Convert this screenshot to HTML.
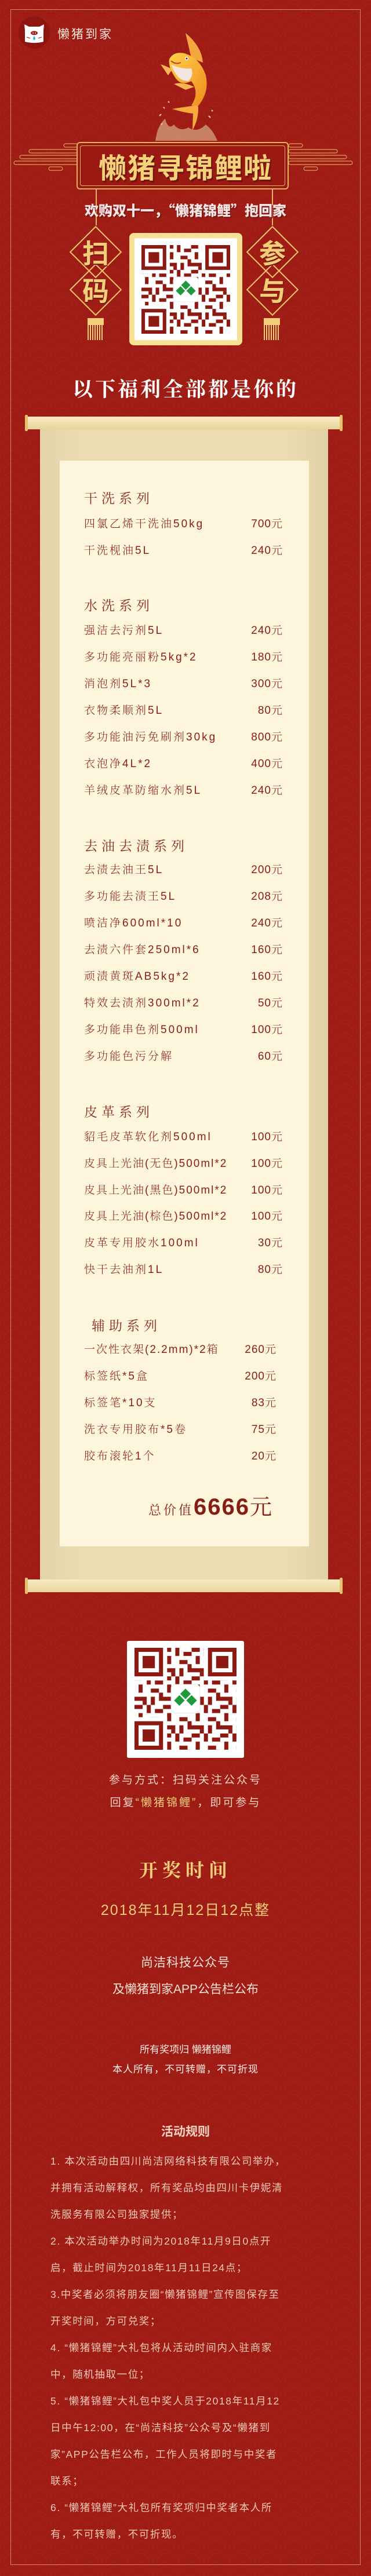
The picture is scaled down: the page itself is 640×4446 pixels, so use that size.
<!DOCTYPE html>
<html><head><meta charset="utf-8">
<style>
*{margin:0;padding:0;box-sizing:border-box}
body{width:640px;height:4446px;position:relative;overflow:hidden;
background-color:#9f1c15;
background-image:radial-gradient(circle at 50% 100%, transparent 14px, rgba(255,255,255,0.035) 15px, transparent 16px, transparent 20px, rgba(255,255,255,0.035) 21px, transparent 22px);
background-size:44px 22px;
font-family:"Liberation Sans","Noto Sans CJK SC",sans-serif}
.a{position:absolute}
.frame{left:18px;top:16px;width:604px;height:4411px;border:1.5px solid #d98c55}
.ser{font-family:"Liberation Serif","Noto Serif CJK SC",serif}
.row{position:absolute;left:145px;width:343px;height:26px;line-height:26px;font-size:19px;color:#8a1c14;letter-spacing:3px;font-family:"Liberation Sans","Noto Serif CJK SC",serif;white-space:nowrap;font-weight:300}
.row span{position:absolute;right:0;top:0;letter-spacing:1px}
.row.n{width:332px}
.sec{position:absolute;left:145px;font-size:23px;color:#8a2a20;letter-spacing:7px;height:30px;line-height:30px;font-family:"Noto Serif CJK SC",serif}
.c{left:0;width:640px;text-align:center;white-space:nowrap}
.gold{color:#f1cf79}
.dia{width:64px;height:64px;border:2px solid #f0c66a;transform:rotate(45deg)}
.dch{width:90px;text-align:center;font-size:46px;font-weight:bold;color:#f1cf79;line-height:50px;font-family:"Noto Sans CJK SC",sans-serif;text-shadow:1px 2px 0 #7a1410}
.rule{left:87px;width:480px;font-size:17.5px;color:#f3c9b8;letter-spacing:1.6px;white-space:nowrap;height:26px;line-height:26px}
</style></head><body>
<div class="a frame"></div>

<div class="a" style="left:32px;top:28px;width:54px;height:56px;border-radius:50%;background:#8f1510"></div>
<svg class="a" style="left:38px;top:38px" width="42" height="38" viewBox="0 0 42 38">
<path d="M4 4 L12 8 L30 8 L38 4 L37 14 L37 34 Q21 38 5 34 L5 14 Z" fill="#fff"/>
<ellipse cx="21" cy="19" rx="6" ry="3.5" fill="#9f1c15"/>
<circle cx="19" cy="19" r="1" fill="#fff"/><circle cx="23" cy="19" r="1" fill="#fff"/>
<path d="M21 24 Q17 30 21 31 Q25 30 21 24Z" fill="#2bb6e0"/>
<path d="M8 26 L14 28 M34 26 L28 28" stroke="#9f1c15" stroke-width="1"/>
</svg>
<div class="a" style="left:99px;top:43px;font-size:21px;color:#f6e6da;letter-spacing:3px;font-family:'Noto Sans CJK SC',sans-serif">懒猪到家</div>

<svg class="a" style="left:250px;top:40px" width="160" height="210" viewBox="250 40 160 210">
<defs><linearGradient id="fg" x1="0" y1="0" x2="1" y2="1"><stop offset="0" stop-color="#ffd24a"/><stop offset="1" stop-color="#f08a1c"/></linearGradient></defs>
<path d="M268 243 Q272 215 285 205 Q290 225 300 215 Q310 228 325 220 Q340 230 355 215 Q368 225 375 243 Z" fill="#e8d4a8" opacity="0.55"/>
<path d="M275 200 l3 -3 M282 185 l2 2 M360 200 l3 3 M365 190 l2 2 M278 215 l2 -2 M290 175 l2 2" stroke="#e8d4a8" stroke-width="2"/>
<path d="M320 57 Q348 80 350 108 L330 100 Z" fill="#f5a640"/>
<path d="M292 102 Q300 88 318 92 Q345 100 355 130 Q362 160 340 185 L330 182 Q345 160 330 140 Q310 150 300 130 Q290 115 292 102Z" fill="url(#fg)"/>
<path d="M296 112 Q305 140 325 140 Q335 130 330 118 Q315 120 296 112Z" fill="#f4e7e0"/>
<path d="M295 105 Q303 112 312 108" stroke="#c33" stroke-width="2" fill="none"/>
<circle cx="322" cy="101" r="3" fill="#fff"/><circle cx="322" cy="101" r="1.5" fill="#333"/>
<path d="M277 111 Q290 115 297 120 L290 130 Z" fill="#f7b655"/>
<path d="M300 145 Q315 140 335 150 L320 155 Z" fill="#f7b655"/>
<path d="M338 182 Q315 185 297 188 Q320 195 333 196 L332 225 Q343 205 342 184 Z" fill="#f6a93c"/>
</svg>

<svg class="a" style="left:22px;top:244px" width="112" height="52" viewBox="0 0 112 52">
<g fill="none" stroke="#d9a35a" stroke-width="1.2">
<rect x="88" y="4" width="24" height="6" rx="3"/><rect x="28" y="14" width="84" height="6" rx="3"/>
<rect x="12" y="24" width="100" height="6" rx="3"/><rect x="2" y="34" width="110" height="6" rx="3"/>
<rect x="62" y="44" width="24" height="6" rx="3"/></g></svg>
<svg class="a" style="left:498px;top:244px" width="112" height="52" viewBox="0 0 112 52">
<g fill="none" stroke="#d9a35a" stroke-width="1.2">
<rect x="0" y="4" width="24" height="6" rx="3"/><rect x="0" y="14" width="84" height="6" rx="3"/>
<rect x="0" y="24" width="100" height="6" rx="3"/><rect x="0" y="34" width="110" height="6" rx="3"/>
<rect x="26" y="44" width="24" height="6" rx="3"/></g></svg>

<div class="a" style="left:132px;top:245px;width:366px;height:82px;border:2px solid #eab55c;border-radius:6px;background:#9a1912"></div>
<div class="a" style="left:138px;top:251px;width:354px;height:70px;border:1.2px solid #eab55c;border-radius:4px"></div>
<div class="a c" style="top:258px;font-size:48px;font-weight:bold;line-height:56px;color:#f3d27a;letter-spacing:2px;text-shadow:2px 3px 0 #6e120e;font-family:'Noto Sans CJK SC',sans-serif">懒猪寻锦鲤啦</div>

<div class="a" style="left:165px;top:327px;width:2px;height:62px;background:#eab55c"></div>
<div class="a" style="left:469px;top:327px;width:2px;height:62px;background:#eab55c"></div>

<div class="a c" style="top:345px;font-size:24px;font-weight:900;line-height:34px;color:#f5e4e4;text-shadow:2px 2px 0 #7a1410;font-family:'Noto Sans CJK SC',sans-serif">欢购双十一，“懒猪锦鲤”抱回家</div>

<div class="a dia" style="left:133px;top:403px"></div>
<div class="a dia" style="left:133px;top:468px"></div>
<div class="a dia" style="left:438px;top:403px"></div>
<div class="a dia" style="left:438px;top:468px"></div>
<div class="a dch" style="left:120px;top:410px">扫</div>
<div class="a dch" style="left:120px;top:475px">码</div>
<div class="a dch" style="left:425px;top:410px">参</div>
<div class="a dch" style="left:425px;top:475px">与</div>
<div class="a" style="left:151px;top:549px;width:28px;height:12px;background:#f1cf79"></div>
<div class="a" style="left:151px;top:561px;width:28px;height:26px;background:repeating-linear-gradient(90deg,#f1cf79 0 2px,transparent 2px 4px)"></div>
<div class="a" style="left:455px;top:549px;width:28px;height:12px;background:#f1cf79"></div>
<div class="a" style="left:455px;top:561px;width:28px;height:26px;background:repeating-linear-gradient(90deg,#f1cf79 0 2px,transparent 2px 4px)"></div>

<div class="a" style="left:223px;top:402px;width:195px;height:194px;background:#f7df93;border-radius:8px"></div>
<div class="a" style="left:232px;top:411px;width:177px;height:176px;background:#fff"></div>
<svg class="a" style="left:244px;top:423px" width="153" height="153" viewBox="0 0 25 25">
<defs><pattern id="qp" width="7" height="7" patternUnits="userSpaceOnUse">
<rect x="0" y="0" width="2" height="1" fill="#8c1a12"/><rect x="3" y="0" width="1" height="2" fill="#8c1a12"/><rect x="5" y="1" width="2" height="1" fill="#8c1a12"/>
<rect x="1" y="2" width="1" height="2" fill="#8c1a12"/><rect x="4" y="3" width="2" height="1" fill="#8c1a12"/><rect x="0" y="5" width="3" height="1" fill="#8c1a12"/>
<rect x="4" y="5" width="1" height="2" fill="#8c1a12"/><rect x="6" y="4" width="1" height="2" fill="#8c1a12"/><rect x="2" y="6" width="1" height="1" fill="#8c1a12"/>
</pattern>
<g id="fnd"><rect x="0" y="0" width="7" height="7" fill="#8c1a12"/><rect x="1" y="1" width="5" height="5" fill="#fff"/><rect x="2" y="2" width="3" height="3" fill="#8c1a12"/></g></defs>
<rect width="25" height="25" fill="url(#qp)"/>
<rect x="0" y="0" width="8" height="8" fill="#fff"/><rect x="17" y="0" width="8" height="8" fill="#fff"/><rect x="0" y="17" width="8" height="8" fill="#fff"/>
<use href="#fnd"/><use href="#fnd" x="18"/><use href="#fnd" y="18"/>
<rect x="9" y="9" width="7" height="7" rx="1" fill="#fff" stroke="#eee" stroke-width="0.2"/>
<path d="M12.5 10 l1.3 1.3 -1.3 1.3 -1.3 -1.3Z M11 11.6 l1.3 1.3 -1.3 1.3 -1.3 -1.3Z M14 11.6 l1.3 1.3 -1.3 1.3 -1.3 -1.3Z" fill="#1e9a3c"/>
</svg>

<div class="a c ser" style="top:648px;font-size:35px;line-height:44px;color:#fff;letter-spacing:4px;font-family:'Noto Serif CJK SC',serif;font-weight:bold">以下福利全部都是你的</div>

<div class="a" style="left:69px;top:726px;width:497px;height:2006px;background:#ecdcb1;background-image:linear-gradient(90deg,rgba(0,0,0,0.04),transparent 15%,transparent 85%,rgba(0,0,0,0.05))"></div>
<div class="a" style="left:45px;top:719px;width:544px;height:22px;border-radius:4px;background:linear-gradient(#f9ecc4,#e9d39b)"></div>
<div class="a" style="left:43px;top:716px;width:5px;height:28px;border-radius:2px;background:#e4c16a"></div>
<div class="a" style="left:586px;top:716px;width:5px;height:28px;border-radius:2px;background:#e4c16a"></div>
<div class="a" style="left:103px;top:795px;width:430px;height:1874px;background:#fdf6dc"></div>
<div class="a" style="left:45px;top:2726px;width:544px;height:22px;border-radius:4px;background:linear-gradient(#f9ecc4,#e9d39b)"></div>
<div class="a" style="left:43px;top:2723px;width:5px;height:28px;border-radius:2px;background:#e4c16a"></div>
<div class="a" style="left:586px;top:2723px;width:5px;height:28px;border-radius:2px;background:#e4c16a"></div>

<div class="sec" style="top:844px">干洗系列</div>
<div class="row" style="top:892px">四氯乙烯干洗油50kg<span>700元</span></div>
<div class="row" style="top:938px">干洗枧油5L<span>240元</span></div>

<div class="sec" style="top:1029px">水洗系列</div>
<div class="row" style="top:1076px">强洁去污剂5L<span>240元</span></div>
<div class="row" style="top:1122px">多功能亮丽粉5kg*2<span>180元</span></div>
<div class="row" style="top:1168px">消泡剂5L*3<span>300元</span></div>
<div class="row" style="top:1214px">衣物柔顺剂5L<span>80元</span></div>
<div class="row" style="top:1260px">多功能油污免刷剂30kg<span>800元</span></div>
<div class="row" style="top:1306px">衣泡净4L*2<span>400元</span></div>
<div class="row" style="top:1352px">羊绒皮革防缩水剂5L<span>240元</span></div>

<div class="sec" style="top:1444px">去油去渍系列</div>
<div class="row" style="top:1489px">去渍去油王5L<span>200元</span></div>
<div class="row" style="top:1535px">多功能去渍王5L<span>208元</span></div>
<div class="row" style="top:1581px">喷洁净600ml*10<span>240元</span></div>
<div class="row" style="top:1627px">去渍六件套250ml*6<span>160元</span></div>
<div class="row" style="top:1673px">顽渍黄斑AB5kg*2<span>160元</span></div>
<div class="row" style="top:1719px">特效去渍剂300ml*2<span>50元</span></div>
<div class="row" style="top:1765px">多功能串色剂500ml<span>100元</span></div>
<div class="row" style="top:1811px">多功能色污分解<span>60元</span></div>

<div class="sec" style="top:1903px">皮革系列</div>
<div class="row" style="top:1950px">貂毛皮革软化剂500ml<span>100元</span></div>
<div class="row" style="top:1996px;letter-spacing:2px">皮具上光油(无色)500ml*2<span>100元</span></div>
<div class="row" style="top:2042px;letter-spacing:2px">皮具上光油(黑色)500ml*2<span>100元</span></div>
<div class="row" style="top:2087px;letter-spacing:2px">皮具上光油(棕色)500ml*2<span>100元</span></div>
<div class="row" style="top:2133px">皮革专用胶水100ml<span>30元</span></div>
<div class="row" style="top:2179px">快干去油剂1L<span>80元</span></div>

<div class="sec" style="top:2272px;left:158px">辅助系列</div>
<div class="row n" style="top:2317px;letter-spacing:2px">一次性衣架(2.2mm)*2箱<span>260元</span></div>
<div class="row n" style="top:2363px">标签纸*5盒<span>200元</span></div>
<div class="row n" style="top:2409px">标签笔*10支<span>83元</span></div>
<div class="row n" style="top:2455px">洗衣专用胶布*5卷<span>75元</span></div>
<div class="row n" style="top:2501px">胶布滚轮1个<span>20元</span></div>

<div class="a" style="left:256px;top:2570px;width:230px;height:50px;color:#8a1c14;white-space:nowrap;font-family:'Noto Serif CJK SC',serif"><span style="font-size:22px;letter-spacing:4px">总价值</span><span style="font-family:'Liberation Sans',sans-serif;font-size:40px;font-weight:bold;letter-spacing:2px">6666</span><span style="font-size:38px">元</span></div>

<div class="a" style="left:219px;top:2832px;width:202px;height:202px;background:#fff;border-radius:3px"></div>
<svg class="a" style="left:232px;top:2844px" width="176" height="176" viewBox="0 0 25 25">
<rect width="25" height="25" fill="url(#qp)"/>
<rect x="0" y="0" width="8" height="8" fill="#fff"/><rect x="17" y="0" width="8" height="8" fill="#fff"/><rect x="0" y="17" width="8" height="8" fill="#fff"/>
<use href="#fnd"/><use href="#fnd" x="18"/><use href="#fnd" y="18"/>
<rect x="9" y="9" width="7" height="7" rx="1" fill="#fff" stroke="#eee" stroke-width="0.2"/>
<path d="M12.5 10 l1.3 1.3 -1.3 1.3 -1.3 -1.3Z M11 11.6 l1.3 1.3 -1.3 1.3 -1.3 -1.3Z M14 11.6 l1.3 1.3 -1.3 1.3 -1.3 -1.3Z" fill="#1e9a3c"/>
</svg>

<div class="a c" style="top:3060px;font-size:19px;line-height:26px;color:#f3d2c4;letter-spacing:3px">参与方式：扫码关注公众号</div>
<div class="a c" style="top:3099px;font-size:19px;line-height:26px;color:#f3d2c4;letter-spacing:3px">回复<span class="gold">“懒猪锦鲤”</span>，即可参与</div>

<div class="a c gold" style="top:3206px;font-size:32px;line-height:40px;letter-spacing:8px;font-weight:bold;font-family:'Noto Serif CJK SC',serif">开奖时间</div>
<div class="a c gold" style="top:3281px;font-size:25px;line-height:32px;letter-spacing:2px">2018年11月12日12点整</div>

<div class="a c" style="top:3374px;font-size:21px;line-height:28px;color:#f6e3d8;letter-spacing:1px">尚洁科技公众号</div>
<div class="a c" style="top:3420px;font-size:21px;line-height:28px;color:#f6e3d8;letter-spacing:0px">及懒猪到家APP公告栏公布</div>

<div class="a c" style="top:3526px;font-size:17px;line-height:24px;color:#fbeee8">所有奖项归 懒猪锦鲤</div>
<div class="a c" style="top:3560px;font-size:17px;line-height:24px;color:#fbeee8;letter-spacing:1px">本人所有，不可转赠，不可折现</div>

<div class="a c" style="top:3666px;font-size:21px;line-height:28px;color:#f3d2c4;font-weight:bold">活动规则</div>
<div class="a rule" style="top:3717px">1. 本次活动由四川尚洁网络科技有限公司举办，</div>
<div class="a rule" style="top:3763px">并拥有活动解释权，所有奖品均由四川卡伊妮清</div>
<div class="a rule" style="top:3809px">洗服务有限公司独家提供；</div>
<div class="a rule" style="top:3855px">2. 本次活动举办时间为2018年11月9日0点开</div>
<div class="a rule" style="top:3901px">启，截止时间为2018年11月11日24点；</div>
<div class="a rule" style="top:3947px">3.中奖者必须将朋友圈“懒猪锦鲤”宣传图保存至</div>
<div class="a rule" style="top:3993px">开奖时间，方可兑奖；</div>
<div class="a rule" style="top:4039px">4. “懒猪锦鲤”大礼包将从活动时间内入驻商家</div>
<div class="a rule" style="top:4085px">中，随机抽取一位；</div>
<div class="a rule" style="top:4131px">5. “懒猪锦鲤”大礼包中奖人员于2018年11月12</div>
<div class="a rule" style="top:4177px">日中午12:00，在“尚洁科技”公众号及“懒猪到</div>
<div class="a rule" style="top:4223px">家”APP公告栏公布，工作人员将即时与中奖者</div>
<div class="a rule" style="top:4269px">联系；</div>
<div class="a rule" style="top:4315px">6. “懒猪锦鲤”大礼包所有奖项归中奖者本人所</div>
<div class="a rule" style="top:4361px">有，不可转赠，不可折现。</div>
</body></html>
